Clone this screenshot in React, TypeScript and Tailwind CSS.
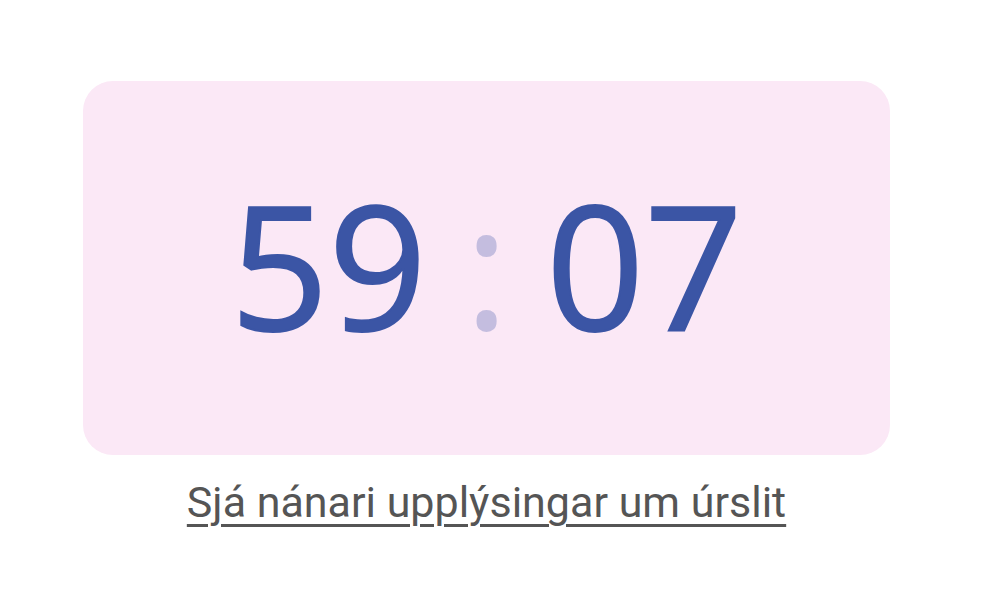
export default function App() {
  return (
    <div className="w-[1000px] h-[600px] bg-white pt-[81px] pl-[83px]">
      <div className="w-[807px] flex flex-col items-center">
        <div className="w-full h-[374px] rounded-[30px] bg-[#fbe8f6] flex items-center justify-center">
          <div
            className="flex items-center text-[172px] leading-none text-[#3b55a5] pb-[10px]"
            style={{ fontFamily: '"Open Sans", sans-serif' }}
          >
            <span className="[-webkit-text-stroke:2px_#3b55a5]">59</span>
            <span className="text-[#c4bddf] mx-[37px]">:</span>
            <span className="[-webkit-text-stroke:2px_#3b55a5]">07</span>
          </div>
        </div>
        <a
          href="#"
          className="mt-[22px] text-[43px] leading-[50px] text-[#555555] underline decoration-[3px] underline-offset-[7px]"
          style={{ fontFamily: 'Roboto, sans-serif' }}
        >
          Sjá nánari upplýsingar um úrslit
        </a>
      </div>
    </div>
  );
}
